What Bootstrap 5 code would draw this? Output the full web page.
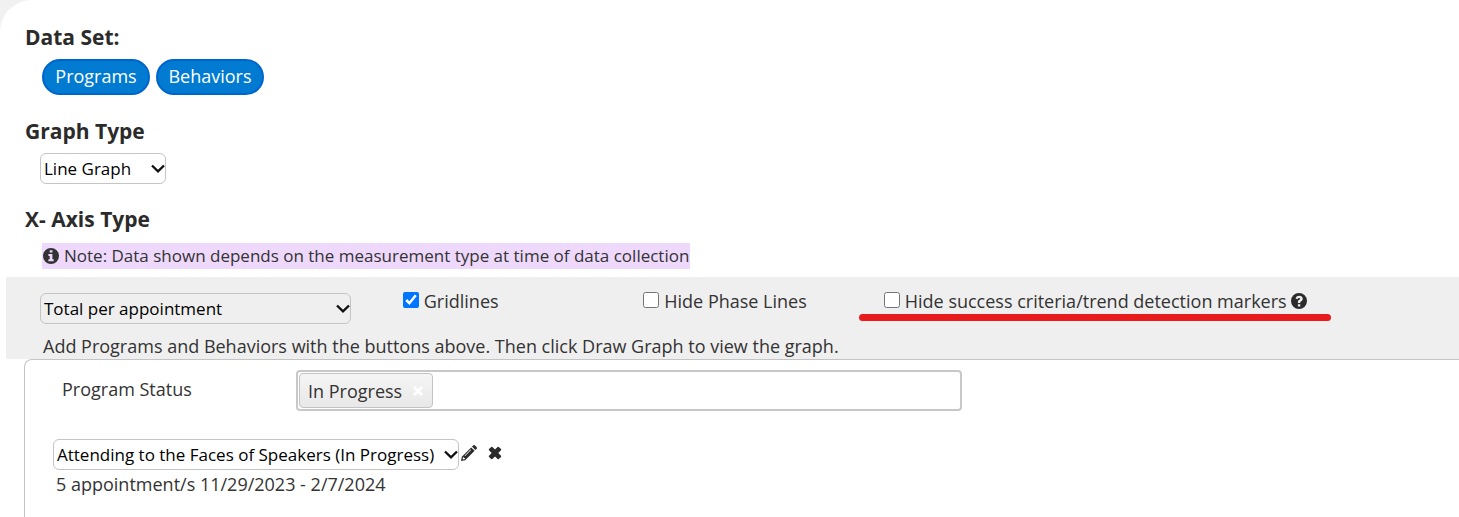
<!DOCTYPE html>
<html lang="en">
<head>
<meta charset="utf-8">
<meta name="viewport" content="width=device-width, initial-scale=1">
<title>Graph settings</title>
<link href="https://cdn.jsdelivr.net/npm/bootstrap@5.3.0/dist/css/bootstrap.min.css" rel="stylesheet">
<style>
  body { background: #f1f1f1; color: #333; font: 400 18px/26px "Open Sans", "Segoe UI", sans-serif; }
  .panel { background: #fff; border-radius: 32px 0 0 0; overflow: hidden; }
  .section-title { font-size: 21px; line-height: 28px; font-weight: 700; color: #2b2b2b; margin: 0; padding-left: 25px; }
  .indent { padding-left: 40px; }
  .data-set { padding-top: 23px; }
  .data-buttons { padding: 8px 0 0 42px; gap: 6px; }
  .graph-type { padding-top: 22px; }
  .graph-type .indent { padding-top: 8px; }
  .axis-type { padding: 21px 0 8px; }
  .note-row { padding: 10px 0 0 42px; }
  .btn-pill, .btn-pill:hover { background: #007bd1; border: 2px solid #0065cb; border-radius: 18px; color: #fff; font-size: 18px; line-height: 24px; height: 36px; width: 108px; padding: 3px 0 5px; }
  .picker {
    appearance: none; height: 31px; border: 1px solid #c4c4c4; border-radius: 6px; color: #000; font-size: 17px; padding: 0 18px 0 3px;
    background: url("data:image/svg+xml,%3Csvg xmlns='http://www.w3.org/2000/svg' viewBox='0 0 14 9'%3E%3Cpath d='M1 1.500 7 7.300 13 1.500' fill='none' stroke='%23111' stroke-width='2.400'/%3E%3C/svg%3E") no-repeat right 0 center / 14px 9px;
  }
  .picker-short { width: 126px; }
  .picker-medium { width: 311px; }
  .picker-long { width: 406px; }
  .note { background: #eed9fd; padding: 0 1px; font-size: 17px; gap: 5px; }
  .band { background: #efefef; margin-left: 6px; padding: 9px 0 0 34px; }
  .options { display: grid; grid-template-columns: 15fr 10fr 10fr 24fr; }
  .pick-cell { padding-top: 7px; }
  .option { height: 30px; }
  .option label { line-height: 24px; }
  .tick { width: 16px; height: 16px; margin: 0 5px 2px 2px; flex: none; accent-color: #0075ff; }
  .marker-line { background: #e81c1c; height: 7px; border-radius: 4px; left: -23px; width: 472px; top: 28px; }
  .hint { padding: 9px 0 0 3px; }
  .programs { border: 1px solid #c4c4c4; border-width: 1px 0 0 1px; border-radius: 8px 0 0 0; margin-left: 24px; padding: 10px 0 0 28px; }
  .status-label { width: 243px; padding: 6px 0 0 9px; }
  .status-box { border: 2px solid #c8c8c8; border-radius: 4px; width: 666px; height: 41px; padding: 1px; }
  .status-chip { border: 1px solid #c4c4c4; border-radius: 4px; background: linear-gradient(#f5f5f5, #e8e8e8); height: 35px; width: 134px; padding: 0 8px; }
  .program-row { padding-top: 28px; }
  .bare { border: 0; background: none; padding: 0; color: #2b2b2b; display: flex; }
  .edit { margin: 0 0 3px 2px; }
  .remove { margin: 0 0 3px 11px; }
  .summary { padding: 1px 0 0 3px; }
  .icon { display: block; fill: currentColor; }
</style>
</head>
<body>
<main class="panel min-vh-100 d-flex flex-column">
  <section class="data-set">
    <h2 class="section-title">Data Set:</h2>
    <div class="d-flex data-buttons">
      <button type="button" class="btn btn-pill">Programs</button>
      <button type="button" class="btn btn-pill">Behaviors</button>
    </div>
  </section>

  <section class="graph-type">
    <h2 class="section-title"><label for="graphType">Graph Type</label></h2>
    <div class="indent d-flex">
      <select id="graphType" class="picker picker-short"><option>Line Graph</option></select>
    </div>
  </section>

  <section class="axis-type">
    <h2 class="section-title"><label for="axisType">X- Axis Type</label></h2>
    <div class="d-flex note-row">
      <span class="note d-inline-flex align-items-center">
        <svg class="icon" width="16" height="16" viewBox="0 0 16 16" aria-hidden="true"><path fill-rule="evenodd" d="M8 0a8 8 0 1 0 0 16A8 8 0 0 0 8 0zM6.7 2.2h2.7v2.4H6.7zM5.4 6h4v5.2h1.3v2H5.4v-2h1.3V8H5.4z"/></svg>
        <span>Note: Data shown depends on the measurement type at time of data collection</span>
      </span>
    </div>
  </section>

  <section class="band">
    <div class="options">
      <div class="pick-cell d-flex"><select id="axisType" class="picker picker-medium"><option>Total per appointment</option></select></div>
      <div class="option d-flex align-items-center"><input class="tick" type="checkbox" id="gridlines" checked><label for="gridlines">Gridlines</label></div>
      <div class="option d-flex align-items-center"><input class="tick" type="checkbox" id="phase"><label for="phase">Hide Phase Lines</label></div>
      <div class="option d-flex align-items-center position-relative">
        <input class="tick" type="checkbox" id="markers"><label for="markers">Hide success criteria/trend detection markers</label>
        <button type="button" class="bare ms-1" aria-label="Help"><svg class="icon" width="16" height="16" viewBox="0 0 16 16"><path fill-rule="evenodd" d="M8 0a8 8 0 1 0 0 16A8 8 0 0 0 8 0zM6.9 11.2h2.4v2.3H6.9zM4.5 5.2C5.300 3.500 6.500 2.700 8.200 2.700c2 0 3.500 1.300 3.500 3 0 1.400-.8 2.100-1.600 2.600-.6.400-.8.600-.8 1v.8H6.900v-.9c0-1.400.7-2 1.400-2.400.6-.4.900-.6.900-1.100 0-.5-.5-.8-1.100-.8-.7 0-1.100.3-1.900 1.300z"/></svg></button>
        <span class="marker-line position-absolute"></span>
      </div>
    </div>
    <p class="hint mb-0">Add Programs and Behaviors with the buttons above. Then click Draw Graph to view the graph.</p>
  </section>

  <section class="programs flex-grow-1">
    <div class="d-flex">
      <div class="status-label">Program Status</div>
      <div class="status-box">
        <div class="status-chip d-flex align-items-center justify-content-between">
          <span>In Progress</span>
          <button type="button" class="bare text-white" aria-label="Remove In Progress"><svg class="icon" width="12" height="12" viewBox="0 0 12 12"><path d="M3 1 6 4 9 1 11 3 8 6l3 3-2 2-3-3-3 3-2-2 3-3-3-3z"/></svg></button>
        </div>
      </div>
    </div>
    <div class="program-row d-flex align-items-center">
      <select class="picker picker-long" aria-label="Program"><option>Attending to the Faces of Speakers (In Progress)</option></select>
      <button type="button" class="bare edit" aria-label="Edit"><svg class="icon" width="16" height="16" viewBox="0 0 16 16"><path fill-rule="evenodd" d="M11 1.600 12.100.5q1-.9 2 0l1.400 1.400q.9 1 0 2L14.400 5zM10.200 2.400l3.400 3.400L4.200 15.200 0 16l.8-4.200zM9.600 4.500 3.600 10.500l.5.500L10.100 5zM2 12.200l-.4 1.700.6.600 1.700-.4v-1.100H2.900v-.8z"/></svg></button>
      <button type="button" class="bare remove" aria-label="Remove"><svg class="icon" width="14" height="14" viewBox="0 0 14 14"><path d="M3.200.9q.6-.5 1.200 0L7 3.500 9.600.9q.6-.5 1.200 0l2.200 2.200q.5.600 0 1.200L10.300 7l2.700 2.700q.5.600 0 1.200l-2.200 2.200q-.6.500-1.200 0L7 10.500l-2.600 2.600q-.6.500-1.200 0L1 10.900q-.5-.6 0-1.200L3.700 7 1 4.300q-.5-.6 0-1.200z"/></svg></button>
    </div>
    <div class="summary">5 appointment/s 11/29/2023 - 2/7/2024</div>
  </section>
</main>
<script src="https://cdn.jsdelivr.net/npm/bootstrap@5.3.0/dist/js/bootstrap.bundle.min.js"></script>
</body>
</html>
